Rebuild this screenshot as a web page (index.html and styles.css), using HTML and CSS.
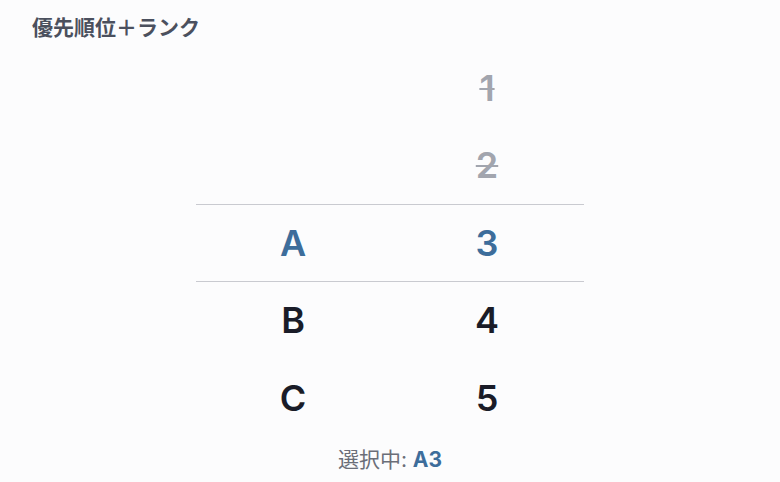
FILE: index.html
```html
<!DOCTYPE html>
<html lang="ja">
<head>
    <meta charset="UTF-8">
    <title>優先順位＋ランク</title>
    <link rel="stylesheet" href="styles.css">
</head>
<body>

<h1 class="title">優先順位＋ランク</h1>

<!-- two wheels: letter + rank -->
<div class="picker">
    <div class="row"><span class="cell"></span><span class="cell disabled">1</span></div>
    <div class="row"><span class="cell"></span><span class="cell disabled">2</span></div>
    <div class="row selected"><span class="cell">A</span><span class="cell">3</span></div>
    <div class="row"><span class="cell">B</span><span class="cell">4</span></div>
    <div class="row"><span class="cell">C</span><span class="cell">5</span></div>
</div>

<p class="status">選択中: <b>A3</b></p>

</body>
</html>
```

FILE: styles.css
```css
body { margin: 0; background: #fcfcfd; font-family: Inter, "Noto Sans", "Noto Sans CJK JP", sans-serif; }
.title { margin: 0; padding: 11px 0 0 32px; font-size: 21px; line-height: 30px; font-weight: 700; color: #4b505e; font-family: "Noto Sans CJK JP", sans-serif; }
.picker { width: 388px; margin: 8px auto 0; }
.row { display: flex; height: 77.5px; box-sizing: border-box; }
.row.selected { border-top: 1px solid #c9cad0; border-bottom: 1px solid #c9cad0; }
.cell { flex: 1; display: flex; align-items: center; justify-content: center; font-size: 36px; font-weight: 600; color: #1a1c28; }
.row.selected .cell { color: #3d6d9b; }
.cell.disabled { color: #a2a5ae; text-decoration: line-through; text-decoration-thickness: 2px; }
.status { margin: 9px 0 0; text-align: center; font-size: 21px; line-height: 28px; color: #6b6e78; font-family: Inter, "Noto Sans CJK JP", sans-serif; }
.status b { color: #3d6d9b; font-weight: 700; }
```
